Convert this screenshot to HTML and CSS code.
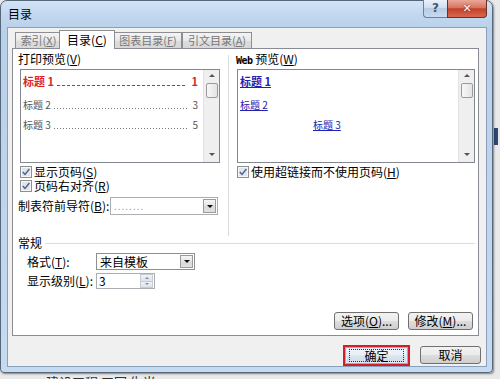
FILE: index.html
```html
<!DOCTYPE html>
<html lang="zh-CN">
<head>
<meta charset="utf-8">
<title>目录</title>
<link rel="stylesheet" href="styles.css">
</head>
<body>
<div class="window">
  <div class="titlebar">
    <span class="title">目录</span>
    <div class="caption">
      <span class="cap-help">?</span>
      <span class="cap-close">✕</span>
    </div>
  </div>
  <div class="client">
    <div class="tabs">
      <span class="tab t1">索引(<u>X</u>)</span>
      <span class="tab t2 active">目录(<u>C</u>)</span>
      <span class="tab t3">图表目录(<u>F</u>)</span>
      <span class="tab t4">引文目录(<u>A</u>)</span>
    </div>
    <div class="panel">
      <div class="cols">
        <div class="col-left">
          <div class="group-label">打印预览(<u>V</u>)</div>
          <div class="listbox lb-left">
            <div class="lb-content">
              <div class="prow r1"><span class="ptxt">标题 1</span><span class="lead lead-red"></span><span class="pnum">1</span></div>
              <div class="prow r2"><span class="ptxt">标题 2</span><span class="lead lead-dot"></span><span class="pnum">3</span></div>
              <div class="prow r3"><span class="ptxt">标题 3</span><span class="lead lead-dot"></span><span class="pnum">5</span></div>
            </div>
            <div class="scroll"><span class="arr-up"></span><span class="thumb"></span><span class="arr-down"></span></div>
          </div>
          <div class="chk first">
            <svg class="cb" width="12" height="12" viewBox="0 0 12 12"><rect x="0.5" y="0.5" width="11" height="11" fill="#f6f6f6" stroke="#8e8f8f"/><rect x="2" y="2" width="8" height="8" fill="#e2e5ea"/><path d="M2.8 6 L5 8.4 L9.4 3" fill="none" stroke="#4d6294" stroke-width="1.5"/></svg>
            <span>显示页码(<u>S</u>)</span>
          </div>
          <div class="chk">
            <svg class="cb" width="12" height="12" viewBox="0 0 12 12"><rect x="0.5" y="0.5" width="11" height="11" fill="#f6f6f6" stroke="#8e8f8f"/><rect x="2" y="2" width="8" height="8" fill="#e2e5ea"/><path d="M2.8 6 L5 8.4 L9.4 3" fill="none" stroke="#4d6294" stroke-width="1.5"/></svg>
            <span>页码右对齐(<u>R</u>)</span>
          </div>
          <div class="leader-row">
            <span class="leader-label">制表符前导符(<u>B</u>):</span>
            <div class="combo combo-leader">
              <span class="combo-text dots">........</span>
              <span class="combo-btn"><span class="tri"></span></span>
            </div>
          </div>
        </div>
        <div class="vdiv"></div>
        <div class="col-right">
          <div class="group-label"><span class="web">Web</span> 预览(<u>W</u>)</div>
          <div class="listbox lb-right">
            <div class="lb-content web-content">
              <div class="wrow w1">标题 1</div>
              <div class="wrow w2">标题 2</div>
              <div class="wrow w3">标题 3</div>
            </div>
            <div class="scroll"><span class="arr-up"></span><span class="thumb"></span><span class="arr-down"></span></div>
          </div>
          <div class="chk first right">
            <svg class="cb" width="12" height="12" viewBox="0 0 12 12"><rect x="0.5" y="0.5" width="11" height="11" fill="#f6f6f6" stroke="#8e8f8f"/><rect x="2" y="2" width="8" height="8" fill="#e2e5ea"/><path d="M2.8 6 L5 8.4 L9.4 3" fill="none" stroke="#4d6294" stroke-width="1.5"/></svg>
            <span>使用超链接而不使用页码(<u>H</u>)</span>
          </div>
        </div>
      </div>
      <div class="general-head"><span>常规</span><span class="hline"></span></div>
      <div class="form-row first">
        <span class="form-label">格式(<u>T</u>):</span>
        <div class="combo combo-format">
          <span class="combo-text">来自模板</span>
          <span class="combo-btn"><span class="tri"></span></span>
        </div>
      </div>
      <div class="form-row">
        <span class="form-label">显示级别(<u>L</u>):</span>
        <div class="spin">
          <span class="spin-text">3</span>
          <span class="spin-btns"><span class="sb"><span class="tri-up"></span></span><span class="sb"><span class="tri-dn"></span></span></span>
        </div>
      </div>
      <div class="panel-btns">
        <span class="btn">选项(<u>O</u>)...</span>
        <span class="btn">修改(<u>M</u>)...</span>
      </div>
    </div>
    <div class="footer">
      <span class="btn btn-ok"><span class="focus">确定</span></span>
      <span class="btn btn-cancel">取消</span>
    </div>
  </div>
</div>
<div class="behind">建设工程 工园 生当</div>
</body>
</html>
```
FILE: styles.css
```css
html, body {
  margin: 0;
  padding: 0;
}
body {
  width: 500px;
  height: 379px;
  overflow: hidden;
  background: linear-gradient(#2b4a73, #2b4a73) 494px 128px / 4px 17px no-repeat, #e9e9e9;
  font-family: "Noto Sans CJK SC", "Noto Sans", sans-serif;
  font-size: 12px;
  line-height: 14px;
  color: #000;
}
u { text-decoration: underline; text-underline-offset: 1px; }

.window {
  width: 493px;
  height: 373px;
  box-sizing: border-box;
  border: 1px solid #56677c;
  border-radius: 7px 7px 4px 4px;
  background: linear-gradient(180deg, #d3e3f5 0, #c2d7ef 14px, #b9d0ea 30px, #c6daf0 100%);
  padding: 0 5px 5px 6px;
  display: flex;
  flex-direction: column;
  box-shadow: 1px 1px 2px rgba(0, 0, 0, .45);
}
.titlebar {
  height: 26px;
  display: flex;
  align-items: flex-start;
  flex: none;
}
.title {
  margin: 6px 0 0 1px;
  font-size: 12px;
  line-height: 14px;
  color: #000;
}
.caption {
  margin-left: auto;
  margin-top: -1px;
  display: flex;
  height: 18px;
}
.cap-help {
  width: 24px;
  box-sizing: border-box;
  border: 1px solid #6f8198;
  border-right: none;
  border-top: none;
  border-radius: 0 0 0 4px;
  background: linear-gradient(#eaf1f9, #d0deef 45%, #b7cbe3 50%, #c9daee);
  color: #45556b;
  font: bold 12px/17px "DejaVu Sans", sans-serif;
  text-align: center;
}
.cap-close {
  width: 40px;
  box-sizing: border-box;
  border: 1px solid #6a3128;
  border-top: none;
  border-radius: 0 0 4px 0;
  background: linear-gradient(#eaa898, #d87462 45%, #c2402a 52%, #d5694f);
  color: #fff;
  font: bold 11px/17px "DejaVu Sans", sans-serif;
  text-align: center;
  text-shadow: 0 0 2px #7a1a10;
}

.client {
  flex: 1;
  background: #f0f0f0;
  border: 1px solid #8a9fba;
  display: flex;
  flex-direction: column;
}
.tabs {
  display: flex;
  align-items: flex-end;
  height: 20px;
  padding-left: 7px;
  position: relative;
  z-index: 1;
  flex: none;
}
.tab {
  height: 16px;
  box-sizing: border-box;
  border: 1px solid #8c8e94;
  border-bottom: none;
  margin-right: -1px;
  background: linear-gradient(#f4f4f4, #e8e8e8 50%, #dcdcdc 52%, #d8d8d8);
  color: #777;
  font-size: 11px;
  line-height: 15px;
  text-align: center;
  white-space: nowrap;
}
.t1 { width: 47px; }
.t2 { width: 56px; }
.t3 { width: 68px; }
.t4 { width: 70px; }
.tab.active {
  height: 19px;
  margin: 0 -2px -1px -2px;
  background: #fff;
  color: #000;
  font-size: 12px;
  line-height: 17px;
  position: relative;
  z-index: 2;
}
.t3 { margin-left: 1px; }
.t4 { margin-left: 1px; }

.panel {
  flex: none;
  height: 288px;
  margin: 0 7px 0 4px;
  background: #fff;
  border: 1px solid #898c95;
  box-sizing: border-box;
  display: flex;
  flex-direction: column;
  padding: 3px 3px 5px 5px;
}
.cols {
  display: flex;
  height: 184px;
  flex: none;
}
.col-left { width: 202px; }
.vdiv {
  width: 1px;
  background: #d9d9d9;
  margin: 3px 7px 0 8px;
}
.col-right { flex: 1; }
.group-label {
  height: 14px;
  line-height: 14px;
  margin-bottom: 3px;
  white-space: nowrap;
}
.web {
  font-family: "DejaVu Sans Mono", monospace;
  font-size: 10px;
  font-weight: bold;
  letter-spacing: -0.5px;
}
.listbox {
  height: 94px;
  border: 1px solid #828790;
  box-sizing: border-box;
  display: flex;
  background: #fff;
}
.lb-left { margin-left: 2px; width: 200px; }
.lb-right { margin-left: 1px; width: 238px; }
.lb-content {
  flex: 1;
  padding: 4px 4px 0 2px;
  overflow: hidden;
}
.scroll {
  width: 15px;
  background: #efefef;
  border-left: 1px solid #e2e2e2;
  display: flex;
  flex-direction: column;
  align-items: center;
}
.arr-up {
  margin-top: 4px;
  width: 0;
  height: 0;
  border-left: 3px solid transparent;
  border-right: 3px solid transparent;
  border-bottom: 3px solid #555;
}
.thumb {
  margin-top: 6px;
  width: 12px;
  height: 15px;
  box-sizing: border-box;
  border: 1px solid #9b9b9b;
  border-radius: 2px;
  background: linear-gradient(90deg, #f7f7f7, #e4e4e4);
}
.arr-down {
  margin-top: auto;
  margin-bottom: 6px;
  width: 0;
  height: 0;
  border-left: 3px solid transparent;
  border-right: 3px solid transparent;
  border-top: 3px solid #555;
}
.prow {
  display: flex;
  align-items: baseline;
  height: 14px;
  line-height: 14px;
}
.r1 { color: #e02424; font-weight: bold; font-size: 11px; }
.r2 { margin-top: 10px; color: #555; font-size: 10px; }
.r3 { margin-top: 6px; color: #555; font-size: 10px; }
.lead {
  flex: 1;
  height: 1px;
  margin: 0 5px 0 3px;
}
.lead-red {
  background: repeating-linear-gradient(90deg, #e02424 0 3px, transparent 3px 5px);
}
.lead-dot {
  background: repeating-linear-gradient(90deg, #777 0 1px, transparent 1px 3px);
}
.pnum { padding-right: 1px; }

.web-content { padding-left: 2px; }
.wrow {
  height: 14px;
  line-height: 14px;
  color: #2222b0;
  text-decoration: underline;
  font-size: 10px;
}
.w1 { font-weight: bold; font-size: 11px; }
.w2 { margin-top: 10px; }
.w3 { margin-top: 6px; margin-left: 73px; }

.chk {
  display: flex;
  align-items: center;
  height: 14px;
  white-space: nowrap;
}
.chk.first { margin-top: 2px; }
.cb { margin: 0 2px 0 2px; flex: none; }
.chk.right .cb { margin-left: 1px; margin-right: 2px; }

.leader-row {
  display: flex;
  align-items: center;
  margin-top: 4px;
}
.leader-label { width: 92px; white-space: nowrap; }
.combo {
  display: flex;
  align-items: center;
  box-sizing: border-box;
  border: 1px solid #abadb3;
  background: #fff;
}
.combo-leader { width: 108px; height: 18px; }
.combo-format { width: 99px; height: 17px; border-color: #8e8f8f; }
.combo-text {
  flex: 1;
  padding-left: 3px;
  white-space: nowrap;
}
.dots { color: #999; letter-spacing: 1px; font-size: 10px; }
.combo-btn {
  width: 13px;
  align-self: stretch;
  margin: 1px;
  box-sizing: border-box;
  border: 1px solid #9a9a9a;
  background: linear-gradient(#f6f6f6, #e4e4e4 50%, #d8d8d8 52%, #e0e0e0);
  display: flex;
  align-items: center;
  justify-content: center;
}
.tri {
  width: 0;
  height: 0;
  border-left: 3px solid transparent;
  border-right: 3px solid transparent;
  border-top: 3px solid #111;
}

.general-head {
  display: flex;
  align-items: center;
  height: 14px;
  flex: none;
}
.hline {
  flex: 1;
  height: 1px;
  background: #dcdcdc;
  margin-left: 3px;
}
.form-row {
  display: flex;
  align-items: center;
  padding-left: 9px;
  margin-top: 3px;
  flex: none;
}
.form-label { width: 69px; white-space: nowrap; }
.spin {
  width: 59px;
  height: 16px;
  box-sizing: border-box;
  border: 1px solid #abadb3;
  display: flex;
  background: #fff;
}
.spin-text { flex: 1; padding-left: 2px; line-height: 14px; }
.spin-btns {
  width: 13px;
  margin: 0 1px 0 0;
  display: flex;
  flex-direction: column;
}
.sb {
  flex: 1;
  background: linear-gradient(#f0f3f7, #dde3ea);
  border: 1px solid #c8ccd2;
  display: flex;
  align-items: center;
  justify-content: center;
}
.sb + .sb { border-top: none; }
.tri-up {
  width: 0; height: 0;
  border-left: 2px solid transparent;
  border-right: 2px solid transparent;
  border-bottom: 2px solid #7a8aa0;
}
.tri-dn {
  width: 0; height: 0;
  border-left: 2px solid transparent;
  border-right: 2px solid transparent;
  border-top: 2px solid #7a8aa0;
}

.panel-btns {
  margin-top: auto;
  display: flex;
  justify-content: flex-end;
  gap: 9px;
  padding-right: 2px;
}
.btn {
  width: 65px;
  height: 18px;
  box-sizing: border-box;
  border: 1px solid #707070;
  border-radius: 3px;
  background: linear-gradient(#f2f2f2, #ebebeb 48%, #dddddd 52%, #cfcfcf);
  text-align: center;
  line-height: 16px;
  white-space: nowrap;
  display: flex;
  align-items: center;
  justify-content: center;
}
.footer {
  flex: 1;
  display: flex;
  justify-content: flex-end;
  align-items: flex-end;
  gap: 10px;
  padding: 0 5px 1px 0;
}
.btn-ok {
  width: 67px;
  height: 21px;
  border: 2px solid #d41e2a;
  border-radius: 0;
  box-shadow: inset 0 0 0 1px #7fb7e3, inset 0 0 0 2px #d9ecfa;
  background: linear-gradient(#f1f6fb, #e8eef5 48%, #dbe3ec 52%, #d2dbe5);
  margin-bottom: -1px;
}
.focus {
  width: 53px;
  height: 11px;
  line-height: 11px;
  border: 1px dotted #333;
  display: block;
  text-align: center;
}
.btn-cancel { width: 61px; height: 18px; margin-bottom: 1px; }

.behind {
  margin: 1px 0 0 46px;
  font-size: 13px;
  line-height: 16px;
  color: #333;
  white-space: nowrap;
}
```
